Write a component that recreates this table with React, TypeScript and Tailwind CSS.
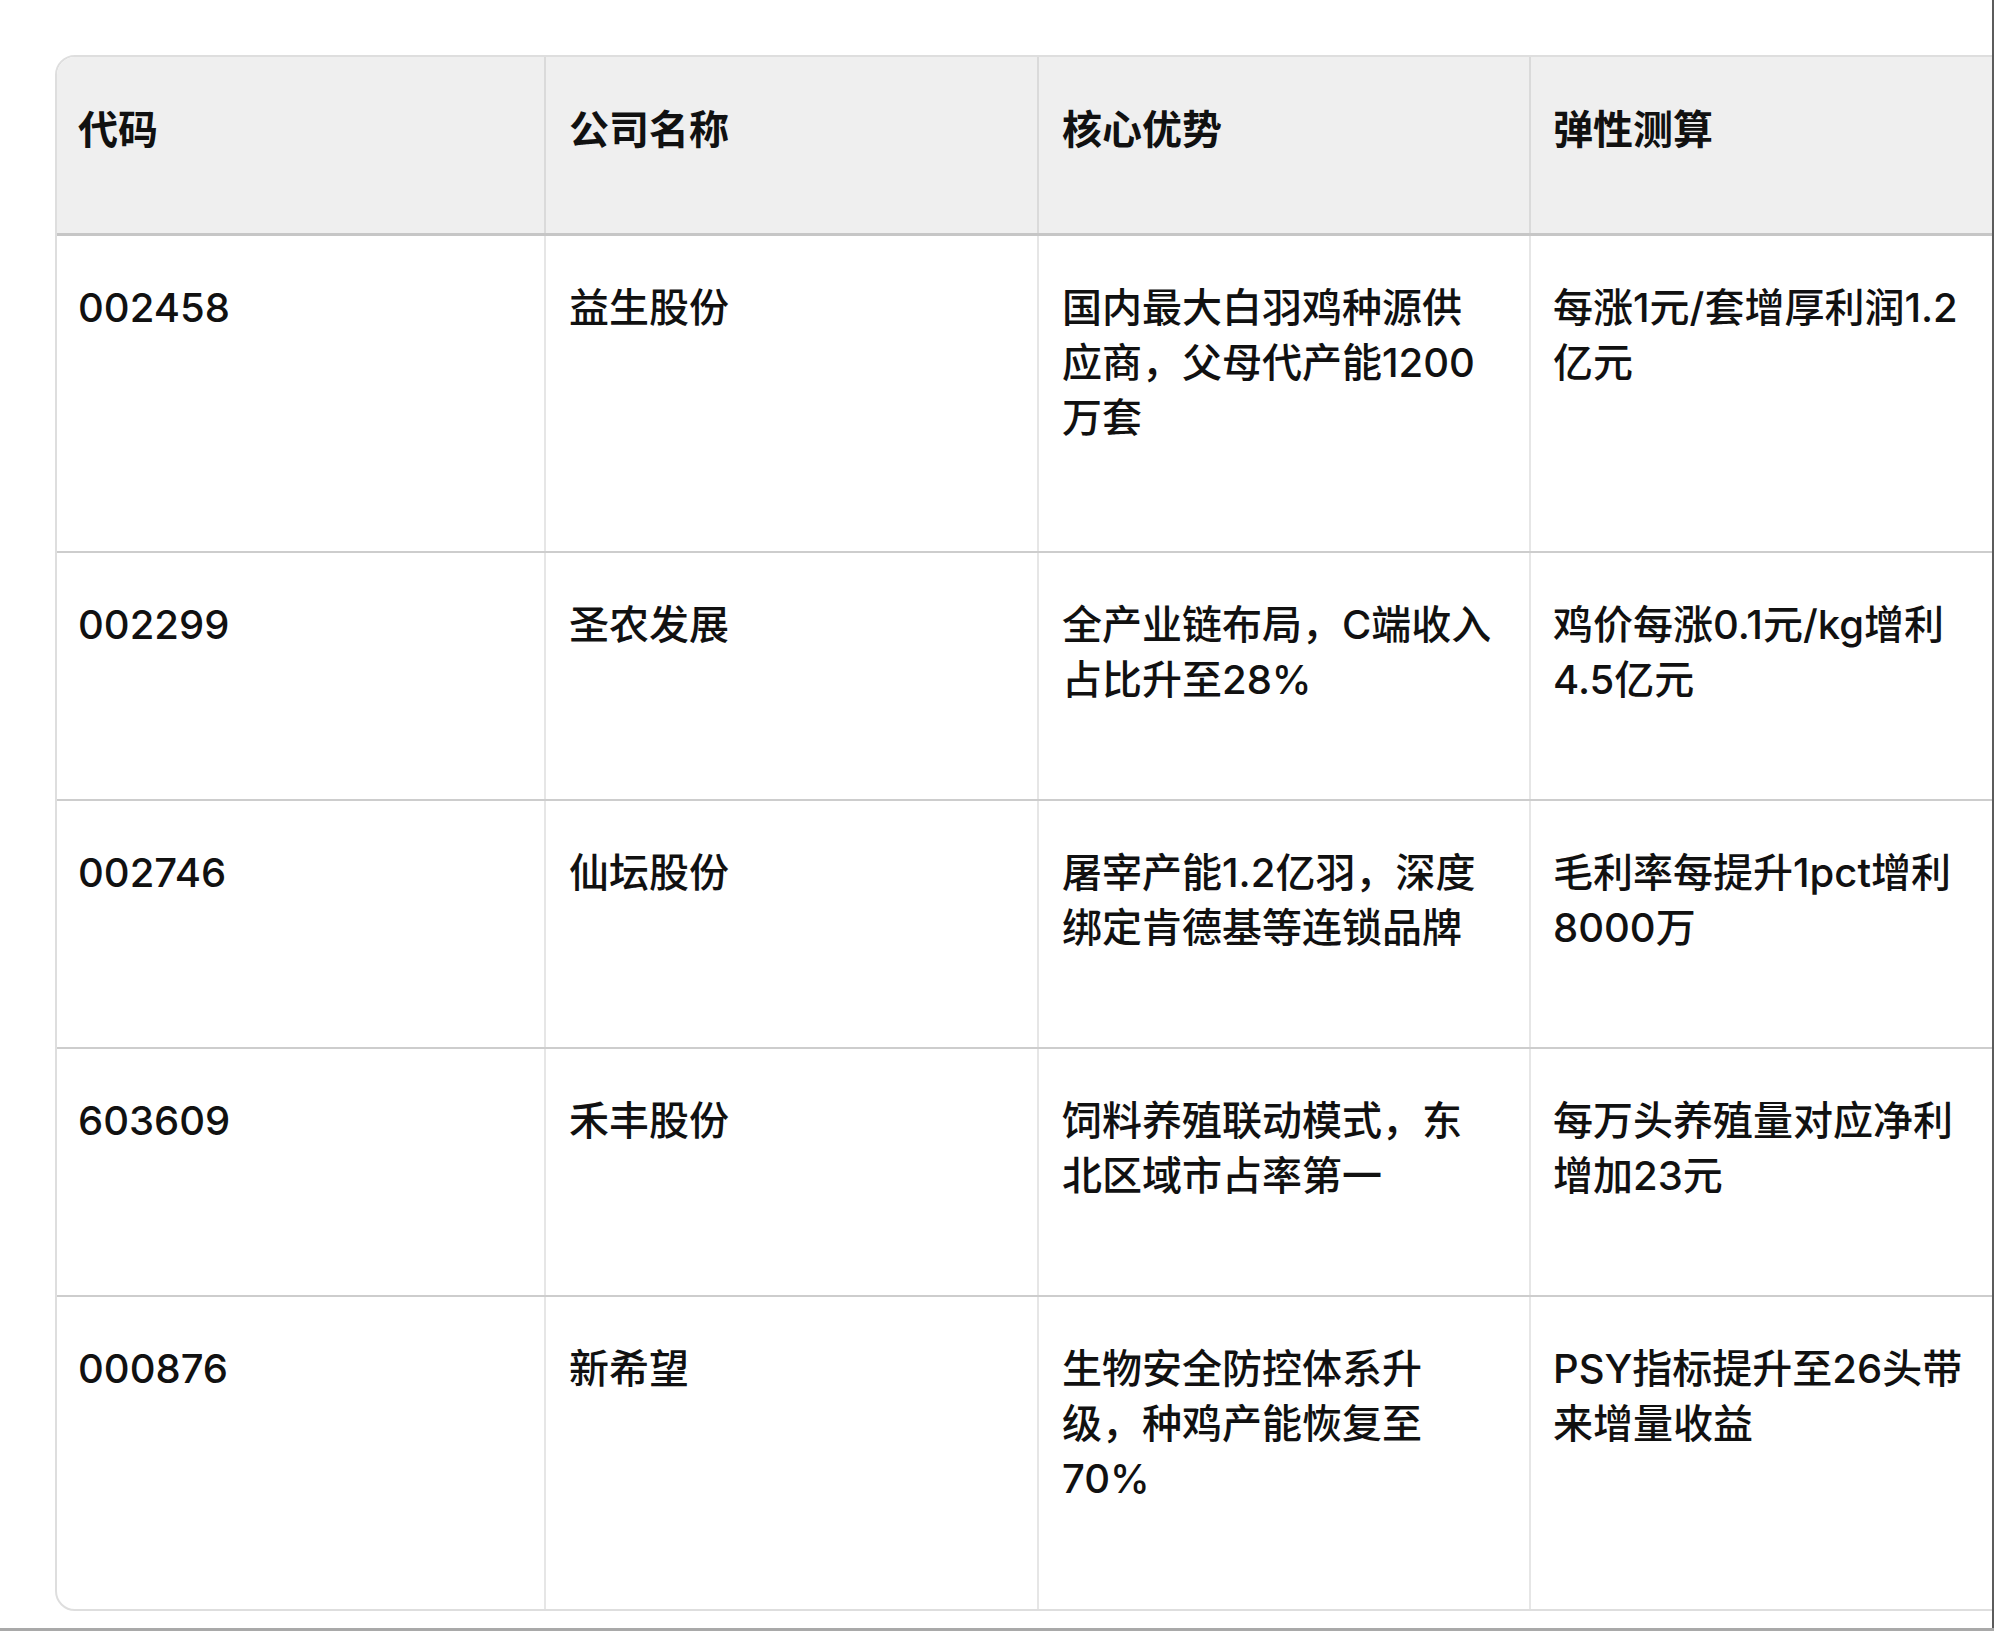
type Row = {
  code: string;
  name: string;
  edge: string[];
  calc: string[];
  height: string;
};

const ROWS: Row[] = [
  {
    code: "002458",
    name: "益生股份",
    edge: ["国内最大白羽鸡种源供", "应商，父母代产能1200", "万套"],
    calc: ["每涨1元/套增厚利润1.2", "亿元"],
    height: "h-[317px]",
  },
  {
    code: "002299",
    name: "圣农发展",
    edge: ["全产业链布局，C端收入", "占比升至28%"],
    calc: ["鸡价每涨0.1元/kg增利", "4.5亿元"],
    height: "h-[248px]",
  },
  {
    code: "002746",
    name: "仙坛股份",
    edge: ["屠宰产能1.2亿羽，深度", "绑定肯德基等连锁品牌"],
    calc: ["毛利率每提升1pct增利", "8000万"],
    height: "h-[248px]",
  },
  {
    code: "603609",
    name: "禾丰股份",
    edge: ["饲料养殖联动模式，东", "北区域市占率第一"],
    calc: ["每万头养殖量对应净利", "增加23元"],
    height: "h-[248px]",
  },
  {
    code: "000876",
    name: "新希望",
    edge: ["生物安全防控体系升", "级，种鸡产能恢复至", "70%"],
    calc: ["PSY指标提升至26头带", "来增量收益"],
    height: "h-[312px]",
  },
];

const FONT = "font-['Inter','Noto_Sans_CJK_SC',sans-serif]";

function Lines({ lines }: { lines: string[] }) {
  return (
    <>
      {lines.map((l) => (
        <div key={l} className="whitespace-nowrap">
          {l}
        </div>
      ))}
    </>
  );
}

export default function App() {
  return (
    <div className={`h-[1631px] w-full overflow-hidden bg-white border-b-[3px] border-[#a9a9a9] ${FONT}`}>
      <div className="h-full overflow-hidden border-r-2 border-[#5c5c5c] pl-[55px] pt-[55px]">
        <div className="w-[2500px] overflow-hidden rounded-[20px] border-2 border-[#dedede] text-[40px] leading-[55px] text-[#111111]">
          {/* header */}
          <div className="flex h-[179px] border-b-[3px] border-[#c6c6c6] bg-[#efefef] font-bold">
            <div className="w-[489px] shrink-0 border-r-2 border-[#dadada] px-[21px] pt-[45px]">代码</div>
            <div className="w-[493px] shrink-0 border-r-2 border-[#dadada] px-[23px] pt-[45px]">公司名称</div>
            <div className="w-[492px] shrink-0 border-r-2 border-[#dadada] px-[23px] pt-[45px]">核心优势</div>
            <div className="w-[492px] shrink-0 border-r-2 border-[#dadada] px-[22px] pt-[45px]">弹性测算</div>
            <div className="flex-1" />
          </div>

          {ROWS.map((r, i) => (
            <div
              key={r.code}
              className={`flex font-medium ${r.height} ${i < ROWS.length - 1 ? "border-b-2 border-[#cdcdcd]" : ""}`}
            >
              <div className="w-[489px] shrink-0 border-r-2 border-[#e6e6e6] px-[21px] pt-[44px]">{r.code}</div>
              <div className="w-[493px] shrink-0 border-r-2 border-[#e6e6e6] px-[23px] pt-[44px]">{r.name}</div>
              <div className="w-[492px] shrink-0 border-r-2 border-[#e6e6e6] px-[23px] pt-[44px]">
                <Lines lines={r.edge} />
              </div>
              <div className="w-[492px] shrink-0 border-r-2 border-[#e6e6e6] px-[22px] pt-[44px]">
                <Lines lines={r.calc} />
              </div>
              <div className="flex-1" />
            </div>
          ))}
        </div>
      </div>
    </div>
  );
}
